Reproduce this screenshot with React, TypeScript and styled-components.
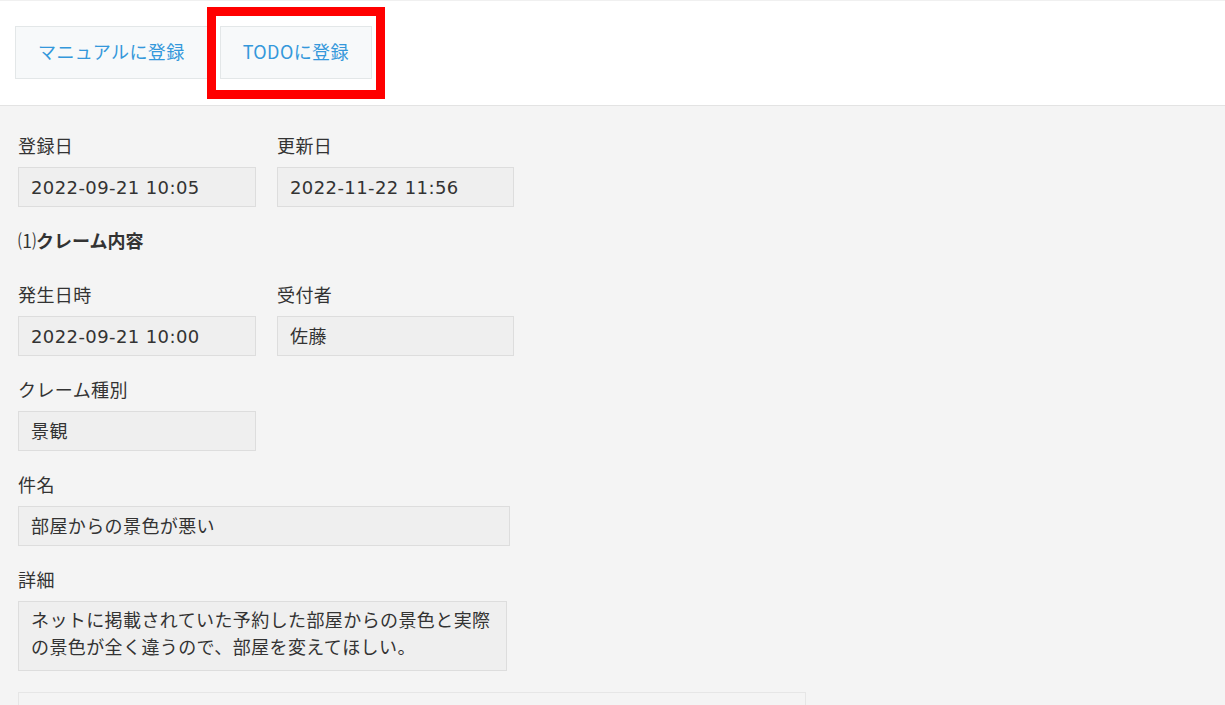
import React from "react";
import styled, { createGlobalStyle } from "styled-components";

const Global = createGlobalStyle`
  html, body { margin: 0; padding: 0; }
  body {
    background: #f4f4f4;
    font-family: "DejaVu Sans", "Noto Sans CJK JP", sans-serif;
    color: #333333;
  }
`;

const Page = styled.div`
  width: 1225px;
  min-height: 705px;
  background: #f4f4f4;
  overflow: hidden;
`;

const Header = styled.header`
  position: relative;
  height: 106px;
  box-sizing: border-box;
  background: #ffffff;
  border-top: 1px solid #f0f0f0;
  border-bottom: 1px solid #e3e3e3;
  padding: 25px 15px 0;
  display: flex;
  gap: 12px;
  align-items: flex-start;
`;

const ActionButton = styled.button`
  height: 53px;
  box-sizing: border-box;
  padding: 0 22px 3px;
  background: #f7f9fa;
  border: 1px solid #e3e7e8;
  color: #3498db;
  font-family: "Noto Sans CJK JP", sans-serif;
  font-size: 18px;
  letter-spacing: 0.4px;
  cursor: pointer;
`;

const Highlight = styled.div`
  position: absolute;
  left: 207px;
  top: 6px;
  width: 178px;
  height: 92px;
  box-sizing: border-box;
  border: 9px solid #ff0000;
  pointer-events: none;
`;

const Body = styled.main`
  padding: 27px 18px 0;
  display: flex;
  flex-direction: column;
`;

const Row = styled.div`
  display: flex;
  gap: 21px;
  margin-bottom: 21px;
`;

const Field = styled.div<{ $w: number }>`
  width: ${(p) => p.$w}px;
  display: flex;
  flex-direction: column;
`;

const Label = styled.div`
  font-family: "Noto Sans CJK JP", sans-serif;
  font-size: 18px;
  letter-spacing: 0.4px;
  line-height: 25px;
  margin-bottom: 9px;
`;

const Value = styled.div<{ $h?: number }>`
  box-sizing: border-box;
  height: ${(p) => p.$h ?? 40}px;
  padding: ${(p) => (p.$h ? "5px 12px" : "6px 12px")};
  background: #efefef;
  border: 1px solid #dddddd;
  font-size: 18px;
  letter-spacing: 0.4px;
  line-height: 27px;
  color: #333333;
  overflow: hidden;
`;

const SectionTitle = styled.div`
  font-family: "Noto Sans CJK JP", sans-serif;
  font-weight: bold;
  font-size: 18px;
  line-height: 25px;
  margin-bottom: 29px;
`;

const Paren = styled.span`
  font-weight: normal;
`;

const NextBox = styled.div`
  width: 788px;
  height: 40px;
  box-sizing: border-box;
  border: 1px solid #e6e6e6;
  background: #f4f4f4;
`;

export default function App() {
  return (
    <Page>
      <Global />
      <Header>
        <ActionButton>マニュアルに登録</ActionButton>
        <ActionButton>TODOに登録</ActionButton>
        <Highlight />
      </Header>
      <Body>
        <Row>
          <Field $w={238}>
            <Label>登録日</Label>
            <Value>2022-09-21 10:05</Value>
          </Field>
          <Field $w={237}>
            <Label>更新日</Label>
            <Value>2022-11-22 11:56</Value>
          </Field>
        </Row>
        <SectionTitle>
          <Paren>⑴</Paren>クレーム内容
        </SectionTitle>
        <Row>
          <Field $w={238}>
            <Label>発生日時</Label>
            <Value>2022-09-21 10:00</Value>
          </Field>
          <Field $w={237}>
            <Label>受付者</Label>
            <Value>佐藤</Value>
          </Field>
        </Row>
        <Row>
          <Field $w={238}>
            <Label>クレーム種別</Label>
            <Value>景観</Value>
          </Field>
        </Row>
        <Row>
          <Field $w={492}>
            <Label>件名</Label>
            <Value>部屋からの景色が悪い</Value>
          </Field>
        </Row>
        <Row>
          <Field $w={489}>
            <Label>詳細</Label>
            <Value $h={70}>
              ネットに掲載されていた予約した部屋からの景色と実際の景色が全く違うので、部屋を変えてほしい。
            </Value>
          </Field>
        </Row>
        <NextBox />
      </Body>
    </Page>
  );
}
